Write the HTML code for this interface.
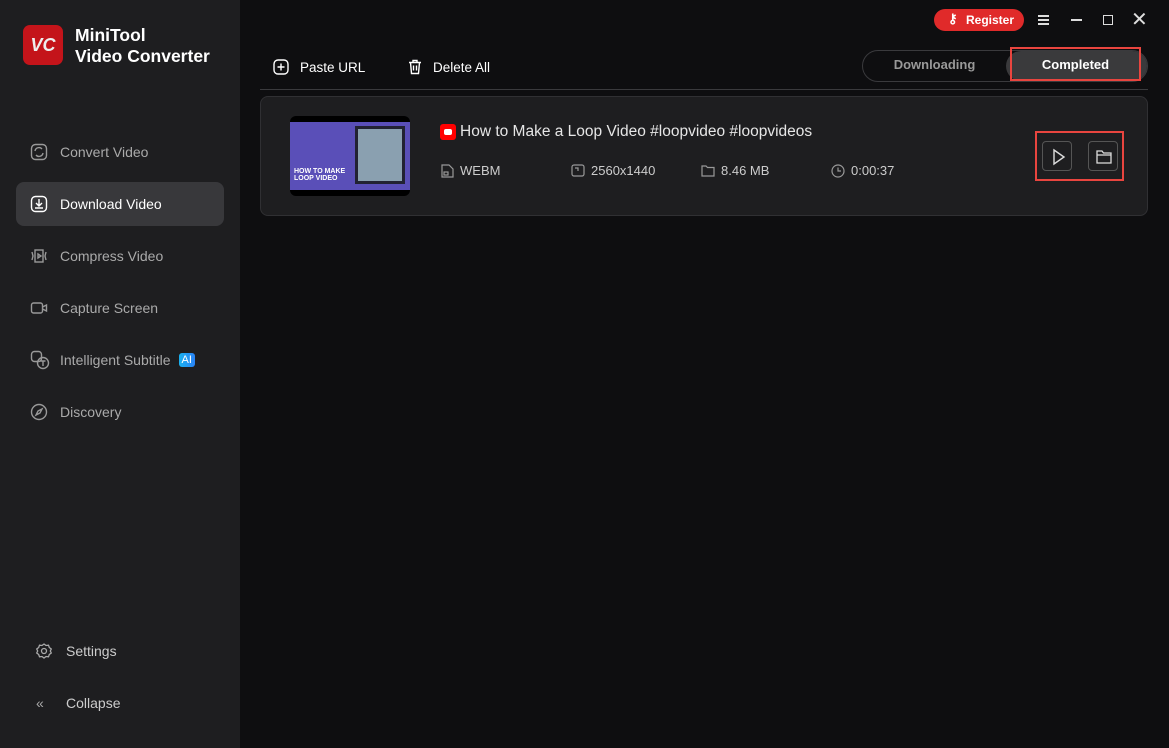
<!DOCTYPE html>
<html><head><style>
*{margin:0;padding:0;box-sizing:border-box}
body{width:1169px;height:748px;background:#0e0e10;font-family:"Liberation Sans",sans-serif;position:relative;overflow:hidden;color:#ddd}
.side{position:absolute;left:0;top:0;width:240px;height:748px;background:#1e1e20}
.logo{position:absolute;left:23px;top:25px;width:40px;height:40px;background:#c4141a;border-radius:7px;color:#eee;font-weight:bold;font-style:italic;font-size:18px;text-align:center;line-height:40px}
.title{position:absolute;left:75px;top:25px;color:#fff;font-weight:bold;font-size:17.5px;line-height:21px}
.nav{position:absolute;left:16px;width:208px;height:44px;border-radius:8px;font-size:14px;color:#aaa;display:flex;align-items:center;padding-left:14px}
.nav svg{margin-right:12px}
.nav.act{background:#38383b;color:#fff}
.ai{background:linear-gradient(90deg,#19b2f0,#2a82f5);color:#fff;font-size:11px;padding:1px 3px;border-radius:3px;margin-left:8px}
.tb{position:absolute;font-size:13.5px;color:#fff;display:flex;align-items:center}
.card{position:absolute;left:260px;top:96px;width:888px;height:120px;background:#1e1e20;border:1px solid #303033;border-radius:8px}
.meta{position:absolute;top:163px;font-size:13px;color:#ccc;display:flex;align-items:center}
.meta svg{margin-right:6px}
.btn{position:absolute;top:141px;width:30px;height:30px;border:1px solid #555;border-radius:4px;background:#1e1e20}
</style></head><body>
<div class="side">
<div class="logo">VC</div>
<div class="title">MiniTool<br>Video Converter</div>
<div class="nav" style="top:130px"><svg width="18" height="18" viewBox="0 0 18 18" fill="none" stroke="#999" stroke-width="1.4"><rect x="1.5" y="1.5" width="15" height="15" rx="4"/><path d="M5 8a4 4 0 0 1 7-2M13 10a4 4 0 0 1-7 2"/></svg>Convert Video</div>
<div class="nav act" style="top:182px"><svg width="18" height="18" viewBox="0 0 18 18" fill="none" stroke="#fff" stroke-width="1.4"><rect x="1.5" y="1.5" width="15" height="15" rx="4"/><path d="M9 4v7M6 8l3 3 3-3M5 13h8"/></svg>Download Video</div>
<div class="nav" style="top:234px"><svg width="18" height="18" viewBox="0 0 18 18" fill="none" stroke="#999" stroke-width="1.4"><rect x="5" y="3" width="8" height="12"/><path d="M2 5l1 4-1 4M16 5l-1 4 1 4M8 7l3 2-3 2z"/></svg>Compress Video</div>
<div class="nav" style="top:286px"><svg width="18" height="18" viewBox="0 0 18 18" fill="none" stroke="#999" stroke-width="1.4"><rect x="1.5" y="4" width="11" height="10" rx="2"/><path d="M12.5 8l4-2v6l-4-2"/></svg>Capture Screen</div>
<div class="nav" style="top:338px"><svg width="20" height="20" viewBox="0 0 20 20" fill="none" stroke="#999" stroke-width="1.4" style="margin-right:10px"><rect x="1.5" y="1.5" width="10" height="10" rx="3"/><circle cx="13" cy="13" r="5.5"/><path d="M10.5 11h5M13 11v5"/></svg>Intelligent Subtitle<span class="ai">AI</span></div>
<div class="nav" style="top:390px"><svg width="18" height="18" viewBox="0 0 18 18" fill="none" stroke="#999" stroke-width="1.4"><circle cx="9" cy="9" r="7.5"/><path d="M12 6l-2 4-4 2 2-4z"/></svg>Discovery</div>
<div class="nav" style="top:629px;left:22px"><svg width="16" height="16" viewBox="0 0 16 16" fill="none" stroke="#aaa" stroke-width="1.3" style="margin-right:14px"><circle cx="8" cy="8" r="2.5"/><path d="M8 1l2 1.5 2.5-.3.8 2.3 2 1.5-1 2 1 2-2 1.5-.8 2.3-2.5-.3L8 15l-2-1.5-2.5.3-.8-2.3-2-1.5 1-2-1-2 2-1.5.8-2.3 2.5.3z"/></svg><span style="color:#ccc">Settings</span></div>
<div class="nav" style="top:681px;left:22px"><span style="color:#aaa;margin-right:16px;font-size:14px;width:14px">«</span><span style="color:#ccc">Collapse</span></div>
</div>

<div class="tb" style="left:273px;top:59px"><svg width="16" height="16" viewBox="0 0 16 16" fill="none" stroke="#fff" stroke-width="1.4" style="margin-right:11px"><rect x="1" y="1" width="14" height="14" rx="4"/><path d="M8 4.5v7M4.5 8h7"/></svg>Paste URL</div>
<div class="tb" style="left:408px;top:59px"><svg width="14" height="16" viewBox="0 0 14 16" fill="none" stroke="#fff" stroke-width="1.4" style="margin-right:11px"><path d="M1 3.5h12M5 3.5V1.5h4v2M2.5 3.5l1 11h7l1-11M5.5 6.5v5M8.5 6.5v5"/></svg>Delete All</div>

<div style="position:absolute;left:934px;top:9px;width:90px;height:22px;background:#e02a2a;border-radius:11px;color:#fff;font-size:12px;font-weight:bold;line-height:22px;padding-left:32px">Register<span style="position:absolute;left:14px;top:-1px;font-size:13px">⚷</span></div>
<div style="position:absolute;left:1038px;top:15px;width:11px;height:10px;border-top:2px solid #ddd;border-bottom:2px solid #ddd"><div style="margin-top:2px;height:2px;background:#ddd"></div></div>
<div style="position:absolute;left:1071px;top:19px;width:11px;height:2px;background:#ddd"></div>
<div style="position:absolute;left:1103px;top:15px;width:10px;height:10px;border:1.5px solid #ddd"></div>
<div style="position:absolute;left:1131px;top:7px;color:#ddd;font-size:20px">✕</div>

<div style="position:absolute;left:862px;top:50px;width:286px;height:32px;border:1px solid #3a3a3d;border-radius:16px"></div>
<div style="position:absolute;left:862px;top:57px;width:145px;text-align:center;color:#999;font-weight:bold;font-size:13px">Downloading</div>
<div style="position:absolute;left:1006px;top:51px;width:141px;height:30px;background:#3a3a3c;border-radius:15px"></div>
<div style="position:absolute;left:1010px;top:47px;width:131px;height:34px;border:2px solid #e9453f;color:#fff;font-weight:bold;font-size:13px;text-align:center;line-height:32px">Completed</div>
<div style="position:absolute;left:260px;top:89px;width:888px;height:1px;background:#3a3a3d"></div>

<div class="card"></div>
<div style="position:absolute;left:290px;top:116px;width:120px;height:80px;background:#000;border-radius:6px;overflow:hidden">
<div style="position:absolute;left:0;top:6px;width:120px;height:68px;background:#5a4fb8"></div>
<div style="position:absolute;left:65px;top:10px;width:50px;height:58px;background:#8aa0b0;border:3px solid #223"></div>
<div style="position:absolute;left:4px;top:52px;color:#fff;font-size:7px;font-weight:bold">HOW TO MAKE<br>LOOP VIDEO</div>
</div>
<div style="position:absolute;left:440px;top:124px;width:16px;height:16px;background:#f00;border-radius:3px"><div style="position:absolute;left:4px;top:5px;width:8px;height:6px;background:#fff;border-radius:2px"></div></div>
<div style="position:absolute;left:460px;top:123px;font-size:15.5px;color:#e6e6e6">How to Make a Loop Video #loopvideo #loopvideos</div>
<div class="meta" style="left:441px"><svg width="13" height="14" viewBox="0 0 13 14" fill="none" stroke="#999" stroke-width="1.2"><path d="M1 1h7l4 4v8H1z"/><rect x="3" y="8" width="4" height="3"/></svg>WEBM</div>
<div class="meta" style="left:571px"><svg width="14" height="13" viewBox="0 0 14 13" fill="none" stroke="#999" stroke-width="1.2"><rect x="1" y="1" width="12" height="11" rx="2"/><path d="M4 4h3v3"/></svg>2560x1440</div>
<div class="meta" style="left:701px"><svg width="14" height="12" viewBox="0 0 14 12" fill="none" stroke="#999" stroke-width="1.2"><path d="M1 1h4l1.5 1.5H13V11H1z"/></svg>8.46 MB</div>
<div class="meta" style="left:831px"><svg width="14" height="14" viewBox="0 0 14 14" fill="none" stroke="#999" stroke-width="1.2"><circle cx="7" cy="7" r="6"/><path d="M7 3.5V7h3"/></svg>0:00:37</div>

<div class="btn" style="left:1042px"><svg width="30" height="30" viewBox="0 0 30 30" fill="none" stroke="#ddd" stroke-width="1.4"><path d="M11 8l10 7-10 7z"/></svg></div>
<div class="btn" style="left:1088px"><svg width="30" height="30" viewBox="0 0 30 30" fill="none" stroke="#ddd" stroke-width="1.3"><path d="M8 9h5l1.5 2H22v10H8z M8 13h14"/></svg></div>
<div style="position:absolute;left:1035px;top:131px;width:89px;height:50px;border:2px solid #e9453f"></div>
</body></html>
